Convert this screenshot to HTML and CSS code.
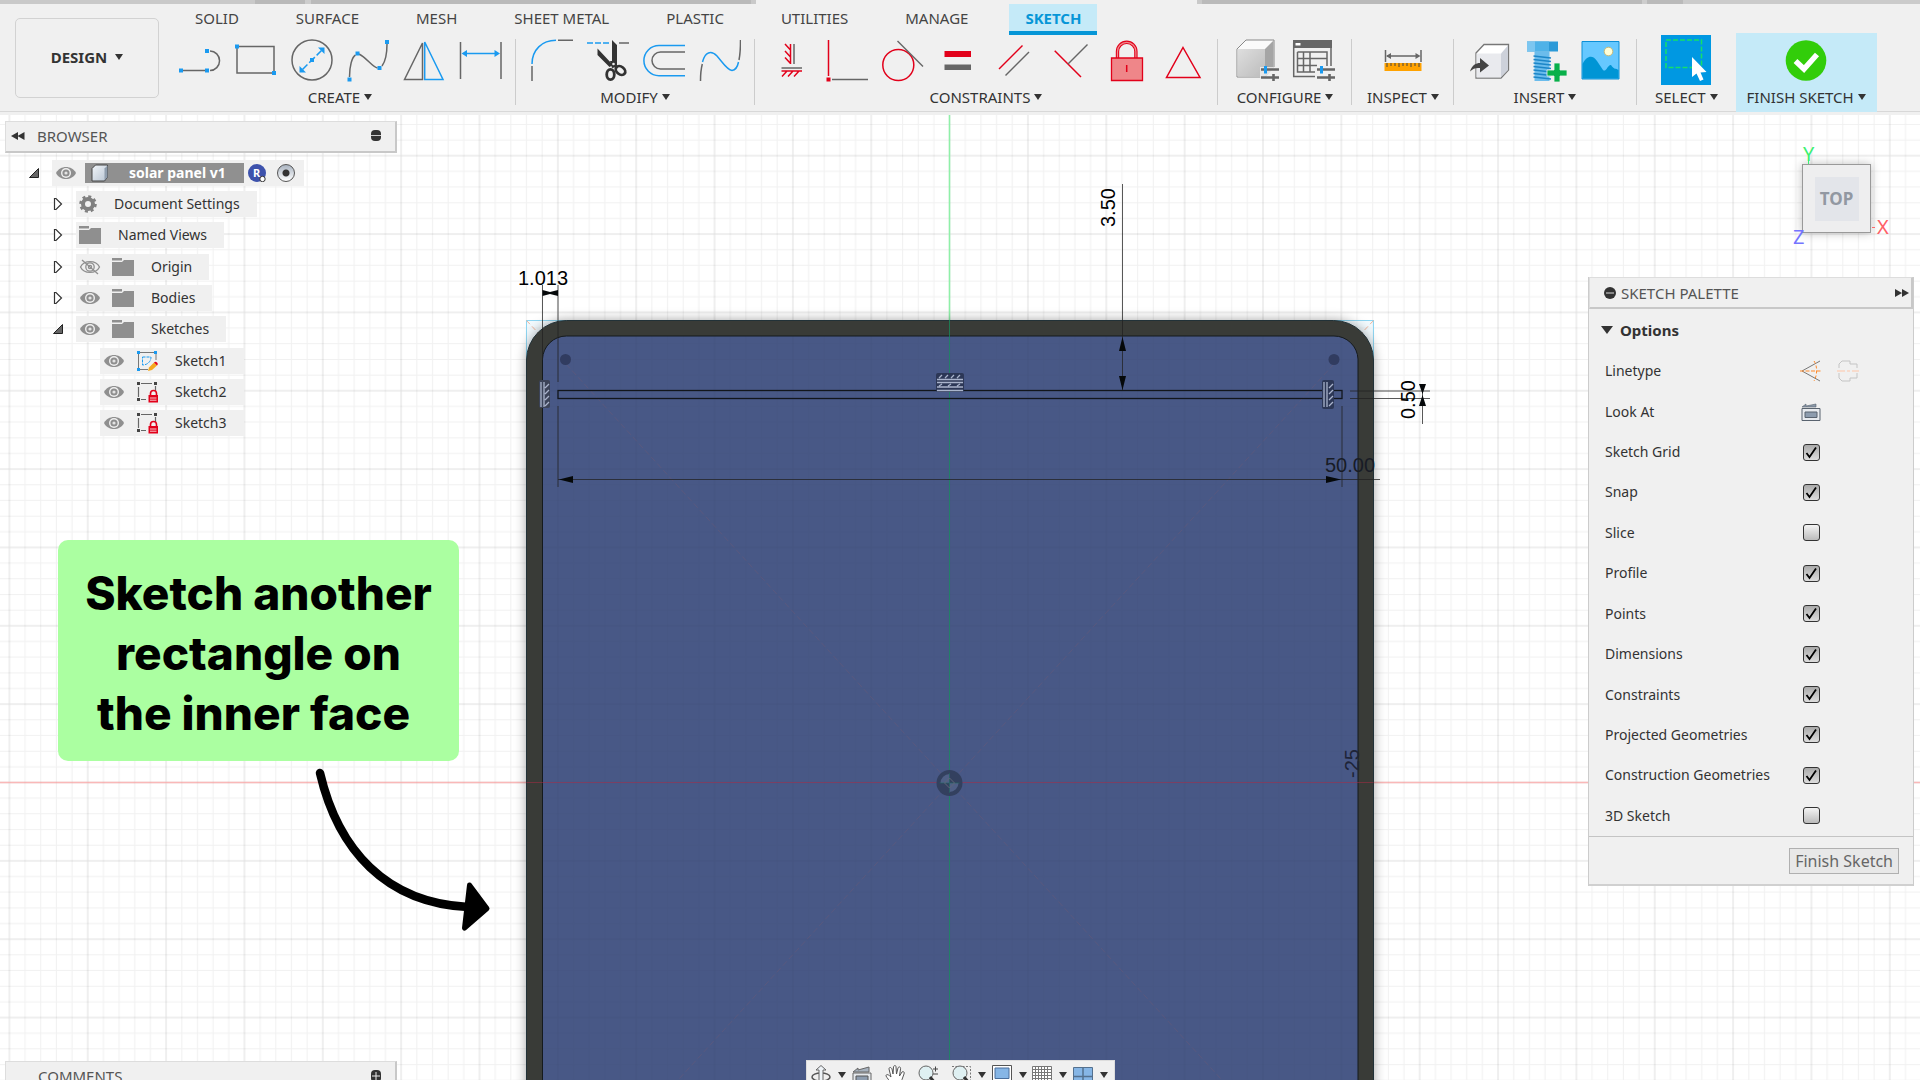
FILE: index.html
```html
<!DOCTYPE html>
<html lang="en">
<head>
<meta charset="utf-8">
<title>solar panel v1</title>
<link rel="stylesheet" href="styles.css">
</head>
<body>
<svg class="defs" aria-hidden="true">
  <defs>
    <symbol id="caret" viewBox="0 0 8 6"><path d="M0 0H8L4 6Z" fill="#333"/></symbol>
    <symbol id="eye" viewBox="0 0 22 16"><path d="M1 8C5 0 17 0 21 8C17 16 5 16 1 8Z" fill="#8f8f8f"/><circle cx="11" cy="8" r="5" fill="#f0f0f0"/><circle cx="11" cy="8" r="3.6" fill="#8f8f8f"/><circle cx="11" cy="8" r="1.6" fill="#e4e4e4"/></symbol>
    <symbol id="eye-off" viewBox="0 0 22 16"><g fill="none" stroke="#8f8f8f" stroke-width="1.3"><path d="M1.500 8C5 .8 17 .8 20.500 8C17 15.200 5 15.200 1.500 8Z"/><circle cx="11" cy="8" r="4.200"/><circle cx="11" cy="8" r="1.600"/><path d="M3 1L19 15"/></g></symbol>
    <symbol id="folder" viewBox="0 0 22 18"><path d="M0 0H10V2.500H0ZM0 4H10L12 2H22V18H0Z" fill="#8f8f8f"/></symbol>
    <symbol id="closed" viewBox="0 0 10 14"><path d="M1.500 1.500H3L8.500 7L3 12.500H1.500Z" fill="#fff" stroke="#333" stroke-width="1.200"/></symbol>
    <symbol id="open" viewBox="0 0 10 10"><path d="M9.500 .5V9.500H.5Z" fill="#666" stroke="#222"/></symbol>
    <symbol id="locked-sketch" viewBox="0 0 22 22"><g stroke="#666" stroke-width="1.200"><path d="M5 2.500H16M2.500 6V16M19.500 5V10M5 18.500H10"/></g><path d="M1 1h3v3H1zM18 1h3v3h-3zM1 17h3v3H1z" fill="#444"/><path d="M14.500 14V12.500a3 3 0 0 1 6 0V14" fill="none" stroke="#e2001a" stroke-width="1.600"/><path d="M12.500 14h9.500v7.500h-9.500z" fill="#e2001a"/><path d="M14 17h6.500M14 19.200h6.500" stroke="#fff" stroke-width=".8"/></symbol>
    <pattern id="grid" x="949.600" y="782.500" width="78.350" height="78.350" patternUnits="userSpaceOnUse">
      <path d="M15.670 0V78.350M31.340 0V78.350M47.010 0V78.350M62.680 0V78.350M0 15.670H78.350M0 31.340H78.350M0 47.010H78.350M0 62.680H78.350" stroke="#000" stroke-opacity=".055" stroke-width="1"/>
      <path d="M0 0V78.350M78.350 0V78.350M0 0H78.350M0 78.350H78.350" stroke="#000" stroke-opacity=".12" stroke-width="1"/>
    </pattern>
    <linearGradient id="face" x2="1" y2="1"><stop stop-color="#f2f6fa"/><stop offset="1" stop-color="#b8c4d2"/></linearGradient>
    <linearGradient id="cube" x2="1" y2="1"><stop stop-color="#dedede"/><stop offset="1" stop-color="#bcbcbc"/></linearGradient>
  </defs>
</svg>

<header class="toolbar">
  <div class="doc-strip"></div>
  <div class="toolbar-body">
    <button class="workspace" type="button">DESIGN <svg class="caret"><use href="#caret"/></svg></button>
    <div class="ribbon">
      <nav class="tabs">
        <a class="tab" href="#solid">SOLID</a>
        <a class="tab" href="#surface">SURFACE</a>
        <a class="tab" href="#mesh">MESH</a>
        <a class="tab" href="#sheet-metal">SHEET METAL</a>
        <a class="tab" href="#plastic">PLASTIC</a>
        <a class="tab" href="#utilities">UTILITIES</a>
        <a class="tab" href="#manage">MANAGE</a>
        <a class="tab tab-active" href="#sketch" aria-current="page">SKETCH</a>
      </nav>
      <div class="groups">
        <section class="group">
          <div class="tools">
            <button class="tool" type="button" aria-label="Line"><svg viewBox="0 0 44 44"><path d="M3 32.500H29M32 13A9.500 9.700 0 0 1 32 32.500" class="gray"/><path d="M1 30.500h4v4H1zM27 30.500h4v4h-4zM27 11h4v4h-4z" class="blue-fill"/></svg></button>
            <button class="tool" type="button" aria-label="Rectangle"><svg viewBox="0 0 44 44"><path d="M3 8.500H40V35H3Z" class="gray"/><path d="M1 6.500h4v4H1zM38 33h4v4h-4z" class="blue-fill"/></svg></button>
            <button class="tool" type="button" aria-label="Circle"><svg viewBox="0 0 44 44"><circle cx="22" cy="22" r="20" class="gray"/><path d="M12.500 31.500L31.500 12.500" class="blue" stroke-dasharray="7 2.500 8 2.500 8"/><path d="M20 20h4v4h-4zM34.500 9.500V16L28 9.500ZM9.500 34.500V28L16 34.500Z" class="blue-fill"/></svg></button>
            <button class="tool" type="button" aria-label="Spline"><svg viewBox="0 0 44 44"><path d="M3.500 39C3.500 28 6 19 9.500 17M13 16C21 20 26 29 31.500 30M36 28C39 24 41 15 41 6" class="gray"/><path d="M1.500 39.500h4v4h-4zM9.500 13.500h4v4h-4zM31.500 28h4v4h-4zM39 2h4v4h-4z" class="blue-fill"/></svg></button>
            <button class="tool" type="button" aria-label="Mirror"><svg viewBox="0 0 44 44"><path d="M2.500 41.500L20.500 5V41.500Z" class="gray"/><path d="M22.700 4V41.500H41Z" class="blue"/></svg></button>
            <button class="tool" type="button" aria-label="Sketch Dimension"><svg viewBox="0 0 44 44"><path d="M2.500 4V41M43 4V41" class="gray"/><path d="M6 15.500H40" class="blue"/><path d="M3.500 15.500L9 12v7zM42 15.500L36.500 12v7z" class="blue-fill"/></svg></button>
          </div>
          <button class="group-label" type="button">CREATE <svg class="caret"><use href="#caret"/></svg></button>
        </section>
        <section class="group">
          <div class="tools">
            <button class="tool" type="button" aria-label="Fillet"><svg viewBox="0 0 44 44"><path d="M3 26C3 12 13 2.300 27 2.300" class="blue"/><path d="M3 28V43M29 2.300H44" class="gray"/></svg></button>
            <button class="tool" type="button" aria-label="Trim"><svg viewBox="0 0 44 44"><path d="M2 5H24" class="blue" stroke-width="2" stroke-dasharray="6 2"/><path d="M34 5H44" class="gray"/><path d="M12.500 10.500L28 27L24.500 29L12.500 17ZM27 2L32 7V26L27 26Z" fill="#333"/><path d="M25 23H32V29L27 30Z" fill="#333"/><circle cx="28.500" cy="26" r="1.300" fill="#f0f0f0"/><g fill="none" stroke="#333" stroke-width="2.800"><ellipse cx="25.500" cy="36.500" rx="3.800" ry="5.200"/><ellipse cx="35.500" cy="32.500" rx="5.200" ry="3.800" transform="rotate(38 35.500 32.500)"/></g></svg></button>
            <button class="tool" type="button" aria-label="Offset"><svg viewBox="0 0 44 44"><path d="M44 7.500H18A15 15 0 0 0 18 37.700H44" class="blue" stroke-width="2"/><path d="M44 14H19.500A8.500 8.500 0 0 0 19.500 31H44" class="gray"/></svg></button>
            <button class="tool" type="button" aria-label="Break"><svg viewBox="0 0 44 44"><path d="M3.500 43C3.500 36 4 31 5.300 26M42 22C43 17 43.500 10 43.500 2" class="gray"/><path d="M5.500 24C8 14 14 12 20 18C26 25 30 32 35 32.500C39 32 40.500 29 41.500 24" class="blue"/></svg></button>
          </div>
          <button class="group-label" type="button">MODIFY <svg class="caret"><use href="#caret"/></svg></button>
        </section>
        <section class="group">
          <div class="tools">
            <button class="tool" type="button" aria-label="Horizontal/Vertical"><svg viewBox="0 0 44 44"><path d="M26 6V26M13.500 30H34" class="gray"/><path d="M22.500 6V26M22.500 12L17 6M22.500 19L17 13M22.500 25.500L17 19.500M13.500 33H34M14 38.500L19 33M20 38.500L25 33M26 38.500L31 33" class="red"/></svg></button>
            <button class="tool" type="button" aria-label="Coincident"><svg viewBox="0 0 44 44"><path d="M4.500 2V38" class="red"/><path d="M8 41.500H44" class="gray"/><path d="M2.500 39.500h4v4h-4z" class="red-fill"/></svg></button>
            <button class="tool" type="button" aria-label="Tangent"><svg viewBox="0 0 44 44"><circle cx="18.300" cy="27" r="15.500" class="red"/><path d="M17.500 3L43 28.500" class="gray"/></svg></button>
            <button class="tool" type="button" aria-label="Equal"><svg viewBox="0 0 44 44"><path d="M8.500 13h26.500v6H8.500z" class="red-fill"/><path d="M8.500 26.500h26.500v5.500H8.500z" fill="#666"/></svg></button>
            <button class="tool" type="button" aria-label="Parallel"><svg viewBox="0 0 44 44"><path d="M7 31L30.500 7.500" class="red"/><path d="M13.500 37.500L37 14" class="gray"/></svg></button>
            <button class="tool" type="button" aria-label="Perpendicular"><svg viewBox="0 0 44 44"><path d="M6.700 12.700L33 39" class="red"/><path d="M20 26L39.500 6.500" class="gray"/></svg></button>
            <button class="tool" type="button" aria-label="Fix"><svg viewBox="0 0 44 44"><path d="M13.500 20V13.500a9.200 9.200 0 0 1 18.400 0V20" fill="none" stroke="#e2001a" stroke-width="3.400"/><path d="M13.500 20V13.500a9.200 9.200 0 0 1 18.400 0V20" fill="none" stroke="#f08a8e" stroke-width="1.200"/><path d="M7.500 20H38.500V42.500H7.500Z" fill="#ef8689" stroke="#e2001a" stroke-width="1.300"/><path d="M22.700 27V34" class="red"/></svg></button>
            <button class="tool" type="button" aria-label="Midpoint"><svg viewBox="0 0 44 44"><path d="M23 9.500L40 39.500H6.500Z" class="red"/></svg></button>
          </div>
          <button class="group-label" type="button">CONSTRAINTS <svg class="caret"><use href="#caret"/></svg></button>
        </section>
        <section class="group group-configure">
          <div class="tools">
            <button class="tool" type="button" aria-label="Configure Model"><svg viewBox="0 0 44 44"><path d="M2 11L11 2H39V29L30 39H2Z" fill="#fafafa" stroke="#888"/><path d="M2.500 11H30V38.500H2.500Z" fill="url(#cube)"/><path d="M30 11L38.500 2.500V29L30 38.500Z" fill="#a5a5a5"/><path d="M25 29H44V44H25Z" fill="#f0f0f0" opacity=".8"/><path d="M26 31.500H44M26 39.500H44M38.500 36V43" stroke="#666" stroke-width="2.600"/><path d="M30.500 28V35.500" stroke="#1a9af0" stroke-width="3"/></svg></button>
            <button class="tool" type="button" aria-label="Configuration Table"><svg viewBox="0 0 44 44"><path d="M2.700 5V38.500H24M40 5V28" class="gray"/><path d="M2 2H41V10H2Z" fill="#666"/><path d="M4.500 5h5v2.500h-5z" fill="#fff"/><path d="M6.500 14H36V28M6.500 14V34H24M6.500 20.500H36M6.500 27.500H26M12.500 14V34M19 14V34" class="gray"/><path d="M26 31.500H44M26 39.500H44M38.500 36V43" stroke="#666" stroke-width="2.600"/><path d="M30.500 28V35.500" stroke="#1a9af0" stroke-width="3"/></svg></button>
          </div>
          <button class="group-label" type="button">CONFIGURE <svg class="caret"><use href="#caret"/></svg></button>
        </section>
        <section class="group group-inspect">
          <div class="tools">
            <button class="tool" type="button" aria-label="Measure"><svg viewBox="0 0 44 44"><path d="M4.500 12V24M40 12V24M6 18H38" class="gray"/><path d="M5 18L10 15v6zM39.500 18L34.500 15v6z" fill="#666"/><path d="M3.500 25h37v8h-37z" fill="#ffa200"/><path d="M6 25v4M10 25v3M14 25v3M18 25v4M22 25v3M26 25v3M30 25v4M34 25v3M38 25v4" stroke="#444"/></svg></button>
          </div>
          <button class="group-label" type="button">INSPECT <svg class="caret"><use href="#caret"/></svg></button>
        </section>
        <section class="group">
          <div class="tools">
            <button class="tool" type="button" aria-label="Insert Derive"><svg viewBox="0 0 44 44"><path d="M9 15L17 6.500H41.500V32L34 40H9Z" fill="#fff" stroke="#777" stroke-width="1.300"/><path d="M9.500 15.500H34V39.500H9.500Z" fill="#e9eaee"/><path d="M34 15.500L41 7.500V32L34 39Z" fill="#cdd1da"/><path d="M3 33.500C5 27 9 25 13 25V20L22 27.500L13 34.500V30C9 29.500 6 30.500 3 33.500Z" fill="#444"/></svg></button>
            <button class="tool" type="button" aria-label="Insert McMaster-Carr Component"><svg viewBox="0 0 44 44"><path d="M4 3.500H35V13.500H4Z" fill="#2c9ad8"/><path d="M4 3.500H12V13.500H4Z" fill="#7cc6f0"/><path d="M12 3.500H26V13.500H12Z" fill="#4fb2e8"/><path d="M11.500 13.500H26.500V43H11.500Z" fill="#6bbcec"/><path d="M10.500 18L28 20M10.500 21.500L28 23.500M10.500 25L28 27M10.500 28.500L28 30.500M10.500 32L28 34M10.500 35.500L28 37.500M10.500 39L28 41" stroke="#1c86c8" stroke-width="1.400"/><path d="M31 25h6v7h7v6h-7v6h-6v-6h-7v-6h7z" fill="#08b04a" stroke="#f0f0f0" stroke-width=".8"/></svg></button>
            <button class="tool" type="button" aria-label="Insert Canvas"><svg viewBox="0 0 44 44"><path d="M3 3.500H40V41H3Z" fill="#66c8ff" stroke="#0c8fd6"/><circle cx="29.500" cy="13.500" r="4.300" fill="#ffffd8" stroke="#c8b978"/><path d="M3.500 26C8 17 14 17 18 23L24 32C27 35 29 26 32 27C35 32 37 30 39.500 32V40.500H3.500Z" fill="#0095d5"/></svg></button>
          </div>
          <button class="group-label" type="button">INSERT <svg class="caret"><use href="#caret"/></svg></button>
        </section>
        <section class="group group-select">
          <div class="tools">
            <button class="tool tool-select" type="button" aria-label="Select"><svg viewBox="0 0 50 50"><path d="M5 5H40.500V32.500H5Z" fill="none" stroke="#14e06a" stroke-width="1.500" stroke-dasharray="5 2"/><path d="M31 22V42L35.500 38.500L39 46L42.500 44.500L39.500 37.500L45.500 37Z" fill="#fff"/></svg></button>
          </div>
          <button class="group-label" type="button">SELECT <svg class="caret"><use href="#caret"/></svg></button>
        </section>
        <section class="group group-finish">
          <div class="tools">
            <button class="tool" type="button" aria-label="Finish Sketch"><svg viewBox="0 0 44 44"><circle cx="22" cy="22.500" r="20.300" fill="#32cd0a"/><path d="M11.500 23L20 31L33 16.500" fill="none" stroke="#fff" stroke-width="5.500"/></svg></button>
          </div>
          <button class="group-label" type="button">FINISH SKETCH <svg class="caret"><use href="#caret"/></svg></button>
        </section>
      </div>
    </div>
  </div>
</header>

<main class="viewport">
  <svg class="canvas" viewBox="0 115 1920 965" preserveAspectRatio="xMidYMin slice" role="img" aria-label="Sketch canvas">
    <rect y="115" width="1920" height="965" fill="#fff"/>
    <rect y="115" width="1920" height="965" fill="url(#grid)"/>
    <path d="M0 782.500H1920" stroke="#ff9a9a" stroke-opacity=".65" stroke-width="1.500"/>
    <path d="M949.500 115V320" stroke="#8ff0a8" stroke-width="1.500"/>
    <rect x="526.500" y="320.500" width="847" height="900" fill="#e6f6fd" fill-opacity=".5" stroke="#8fd6f2"/>
    <path d="M526.500 320.500L542 337M1373.500 320.500L1358 337" stroke="#f0b49a" stroke-dasharray="5 3"/>
    <path class="body-shadow" d="M526.500 1100V360A40 40 0 0 1 566.500 320.500H1333.500A40 40 0 0 1 1373.500 360V1100Z" fill="#393b37" stroke="#223238"/>
    <path d="M542.500 1100V359A24 24 0 0 1 566.500 336H1334A24 24 0 0 1 1358 359V1100Z" fill="#485886" stroke="#151a1d"/>
    <path d="M542.500 1100V359A24 24 0 0 1 566.500 336H1334A24 24 0 0 1 1358 359V1100Z" fill="url(#grid)" fill-opacity=".35"/>
    <path d="M566 364L1221 1079M1334 364L679 1079" stroke="#8a5668" stroke-opacity=".25" stroke-dasharray="6 3"/>
    <path d="M949.500 320V1080" stroke="#14935c" stroke-opacity=".7"/>
    <path d="M526.500 782.500H1373.500" stroke="#b02a44" stroke-opacity=".5"/>
    <circle cx="565.500" cy="359.500" r="5.500" fill="#313c60"/>
    <circle cx="1334" cy="359.500" r="5.500" fill="#313c60"/>
    <circle cx="949.500" cy="783" r="13" fill="#33405f"/>
    <path d="M949.500 783V774A9 9 0 0 0 940.500 783ZM949.500 783V792A9 9 0 0 0 958.500 783Z" fill="#4f5f86"/>
    <path d="M949.500 773V793M939.500 783H959.500" stroke="#226b60" stroke-opacity=".6"/>
    <path d="M944.500 783L949.500 778L954.500 783L949.500 788Z" fill="none" stroke="#5f6678"/>
    <rect x="558" y="390.500" width="784" height="8" fill="none" stroke="#12161c" stroke-width="1.300"/>
    <g stroke="#222" stroke-opacity=".75" fill="none">
      <path d="M542.500 285V360M558 285V382M558 406V487M1342 406V487M558 479.500H1380M1122.500 184V390M1350 391H1430M1350 398.500H1430M1422.500 384V424"/>
    </g>
    <path d="M542.500 290L550 292L558 290V296L550 294L542.500 296ZM559 479.500L573 476V483ZM1341 479.500L1326 476V483ZM1122.500 337L1119 351H1126ZM1122.500 390L1119 376H1126ZM1422.500 394L1419 384H1426ZM1422.500 395L1419 406H1426Z" fill="#05080a"/>
    <g class="glyphs">
      <g><rect x="936" y="373" width="28" height="19" rx="2" fill="#2c3756"/><path d="M937 379.500H963M937 382.500H963M937 387H963M937 390.500H963M939 378L942 375M945 378L948 375M951 378L954 375M957 378L960 375M939 386L942 384M948 386L951 384M957 386L960 384"/></g>
      <g><rect x="539" y="380" width="11" height="28" rx="2" fill="#3b4358"/><path d="M541 382V407M544 382V407M545 388L549 384M545 394L549 390M545 400L549 396M545 406L549 402"/></g>
      <g><rect x="1322" y="380" width="12" height="29" rx="2" fill="#2c3756"/><path d="M1324 382V407M1327 382V407M1329 388L1333 384M1329 394L1333 390M1329 400L1333 396M1329 406L1333 402"/></g>
    </g>
    <g class="dims">
      <text x="518" y="285">1.013</text>
      <text transform="translate(1115 227) rotate(-90)">3.50</text>
      <text transform="translate(1415 419) rotate(-90)">0.50</text>
      <text x="1325" y="472" fill="#181c26">50.00</text>
      <text transform="translate(1359 778) rotate(-90)" fill="#1e2438">-25</text>
    </g>
    <path d="M320 773C338 850 386 903 468 907" fill="none" stroke="#000" stroke-width="8.500" stroke-linecap="round"/>
    <path d="M469.500 885L487 908.500L464.500 928Z" stroke="#000" stroke-width="5" stroke-linejoin="round"/>
  </svg>

  <aside class="browser">
    <header class="bar">
      <svg class="icon-rewind" viewBox="0 0 14 8"><path d="M0 4L7 0V8ZM6.500 4L13.500 0V8Z" fill="#333"/></svg>
      <h2 class="bar-title">BROWSER</h2>
      <button class="bar-button" type="button" aria-label="Minimize"><svg viewBox="0 0 12 12"><rect x="1" width="10" height="11" rx="4" fill="#333"/><path d="M1 5.500H11" stroke="#ccc"/></svg></button>
    </header>
    <ul class="tree">
      <li class="node node-root">
        <svg class="expander"><use href="#open"/></svg>
        <div class="node-body">
          <svg class="eye"><use href="#eye"/></svg>
          <span class="node-selected"><svg class="icon-component" viewBox="0 0 18 18"><path d="M1 4.500L4.500 1H16.500V13L13.500 17H1Z" fill="url(#face)" stroke="#444"/><path d="M13.500 4.500L16.500 1.500V13L13.500 16.500Z" fill="#8f9dad"/></svg>solar panel v1</span>
          <svg class="icon-small" viewBox="0 0 18 18"><circle cx="9" cy="9" r="9" fill="#3d52ac"/><text x="5" y="13" class="badge-letter">R</text><circle cx="14.500" cy="15" r="2.700" fill="#fff" stroke="#333"/></svg>
          <input class="activate" type="radio" name="active" aria-label="Activate component" checked>
        </div>
      </li>
      <li class="node">
        <svg class="expander"><use href="#closed"/></svg>
        <div class="node-body"><svg class="icon-small" viewBox="0 0 18 18"><circle cx="9" cy="9" r="5" fill="none" stroke="#808080" stroke-width="4"/><circle cx="9" cy="9" r="7.500" fill="none" stroke="#808080" stroke-width="2.600" stroke-dasharray="3 2.890"/></svg><span class="node-name">Document Settings</span></div>
      </li>
      <li class="node">
        <svg class="expander"><use href="#closed"/></svg>
        <div class="node-body"><svg class="folder"><use href="#folder"/></svg><span class="node-name">Named Views</span></div>
      </li>
      <li class="node">
        <svg class="expander"><use href="#closed"/></svg>
        <div class="node-body"><svg class="eye"><use href="#eye-off"/></svg><svg class="folder"><use href="#folder"/></svg><span class="node-name">Origin</span></div>
      </li>
      <li class="node">
        <svg class="expander"><use href="#closed"/></svg>
        <div class="node-body"><svg class="eye"><use href="#eye"/></svg><svg class="folder"><use href="#folder"/></svg><span class="node-name">Bodies</span></div>
      </li>
      <li class="node">
        <svg class="expander"><use href="#open"/></svg>
        <div class="node-body"><svg class="eye"><use href="#eye"/></svg><svg class="folder"><use href="#folder"/></svg><span class="node-name">Sketches</span></div>
      </li>
      <li class="node node-leaf">
        <div class="node-body"><svg class="eye"><use href="#eye"/></svg><svg class="folder sketch-icon" viewBox="0 0 22 22"><path d="M2.500 2V20M2 2.500H20M20 2V10M2 19.500H12" stroke="#777" fill="none"/><path d="M6.500 7H15C15 12 11 15 6.500 15Z" fill="none" stroke="#1a9af0" stroke-dasharray="3 1"/><path d="M1 1h3v3H1zM18 1h3v3h-3zM1 18h3v3H1z" fill="#1a9af0"/><path d="M12 21L13 17.500L18 12.500L21 15.500L16 20Z" fill="#f5a81c"/><path d="M18 12.500a2 2 0 1 1 3 3Z" fill="#e2001a"/></svg><span class="node-name">Sketch1</span></div>
      </li>
      <li class="node node-leaf">
        <div class="node-body"><svg class="eye"><use href="#eye"/></svg><svg class="folder sketch-icon"><use href="#locked-sketch"/></svg><span class="node-name">Sketch2</span></div>
      </li>
      <li class="node node-leaf">
        <div class="node-body"><svg class="eye"><use href="#eye"/></svg><svg class="folder sketch-icon"><use href="#locked-sketch"/></svg><span class="node-name">Sketch3</span></div>
      </li>
    </ul>
  </aside>

  <aside class="right-dock">
    <svg class="viewcube" viewBox="0 0 110 110" role="img" aria-label="View cube, top">
      <rect class="cube-face" x="16.500" y="19.500" width="68" height="68" fill="#eeeeef" stroke="#999"/>
      <rect x="29" y="32" width="44" height="44" fill="#e3e5ea"/>
      <path d="M22.500 15V19" stroke="#3cf070"/>
      <path d="M86 82.500H89" stroke="#ff6b6b"/>
      <text x="50.500" y="60" text-anchor="middle" class="cube-label">TOP</text>
      <g class="axis"><text x="17" y="16" fill="#3cf070">Y</text><text x="91" y="89" fill="#ff6068">X</text><text x="7" y="99" fill="#7474ff">Z</text></g>
    </svg>
    <section class="palette">
      <header class="bar">
        <button class="bar-button" type="button" aria-label="Minimize"><svg viewBox="0 0 12 12"><circle cx="6" cy="6" r="6" fill="#333"/><path d="M2 6H10" stroke="#ddd"/></svg></button>
        <h2 class="bar-title">SKETCH PALETTE</h2>
        <svg class="icon-forward" viewBox="0 0 14 8"><path d="M0 0L7 4L0 8ZM7 0L14 4L7 8Z" fill="#333"/></svg>
      </header>
      <h3 class="palette-heading"><svg viewBox="0 0 12 8"><path d="M0 0H12L6 8Z" fill="#333"/></svg>Options</h3>
      <div class="options">
        <div class="option"><span>Linetype</span>
          <span class="option-tools">
            <button class="mini" type="button" aria-label="Construction"><svg viewBox="0 0 22 22"><path d="M20 1L2 11L20 21" fill="none" stroke="#777"/><path d="M0 11H22" stroke="#ff8a2a" stroke-dasharray="4 1.500"/><path d="M14 1C17 5 18 14 14 21" fill="none" stroke="#ff8a2a" stroke-dasharray="3 2"/></svg></button>
            <button class="mini" type="button" aria-label="Centerline"><svg viewBox="0 0 22 22"><path d="M2 8V4L5 1H13V4H20V8M2 13V18L5 21H13V18H20V13" fill="none" stroke="#c4c4c4"/><path d="M0 11H22" stroke="#ffc6a8" stroke-dasharray="8 2 3 2"/></svg></button>
          </span>
        </div>
        <div class="option"><span>Look At</span><button class="mini" type="button" aria-label="Look At"><svg viewBox="0 0 22 22"><path d="M2 7.500H20V19.500H2Z" fill="#e8ebef" stroke="#59636f"/><path d="M5 11H17V16.500H5Z" fill="#8d9cae" stroke="#59636f"/><path d="M2 6L6 3V5L16 3V6Z" fill="#8a98a8" stroke="#59636f" stroke-width=".6"/></svg></button></div>
        <label class="option"><span>Sketch Grid</span><input type="checkbox" checked></label>
        <label class="option"><span>Snap</span><input type="checkbox" checked></label>
        <label class="option"><span>Slice</span><input type="checkbox"></label>
        <label class="option"><span>Profile</span><input type="checkbox" checked></label>
        <label class="option"><span>Points</span><input type="checkbox" checked></label>
        <label class="option"><span>Dimensions</span><input type="checkbox" checked></label>
        <label class="option"><span>Constraints</span><input type="checkbox" checked></label>
        <label class="option"><span>Projected Geometries</span><input type="checkbox" checked></label>
        <label class="option"><span>Construction Geometries</span><input type="checkbox" checked></label>
        <label class="option"><span>3D Sketch</span><input type="checkbox"></label>
      </div>
      <footer class="palette-footer"><button class="finish" type="button">Finish Sketch</button></footer>
    </section>
  </aside>

  <p class="callout">Sketch another<br>rectangle on<br>the inner face&nbsp;</p>

  <div class="bottom-dock">
    <section class="bar comments">
      <h2 class="bar-title">COMMENTS</h2>
      <button class="bar-button" type="button" aria-label="Add comment"><svg viewBox="0 0 12 12"><rect x="1" width="10" height="12" rx="4" fill="#333"/><path d="M2 6H10M6 2V10" stroke="#eee"/></svg></button>
    </section>
    <div class="navbar">
      <button class="nav nav-menu" type="button" aria-label="Orbit"><svg viewBox="0 0 20 20"><ellipse cx="10" cy="12" rx="9" ry="4" fill="none" stroke="#555" stroke-width="1.500"/><path d="M8 16V5H5L10 .5L15 5H12V16Z" fill="#eef3f7" stroke="#666"/></svg><svg class="caret"><use href="#caret"/></svg></button>
      <button class="nav" type="button" aria-label="Look At"><svg viewBox="0 0 20 20"><path d="M1 8H19V20H1Z" fill="#e4e8ec" stroke="#666"/><path d="M4 11H16V18H4Z" fill="#8d9cae" stroke="#555"/><path d="M1 7L6 3V5L17 2V7Z" fill="#a6b1bd" stroke="#666"/></svg></button>
      <button class="nav" type="button" aria-label="Pan"><svg viewBox="0 0 20 20"><path d="M7 20C5 16 2 13 1 11C1 9 3 9 6 12L4 4C4 2 6 2 7 4L8 9L8.500 2C9 0 11 0 11 2L11.500 9L13 3C14 1 16 2 15.500 4L14.500 11L17 7C18 6 20 7 19 9C18 13 16 16 15 20" fill="#fff" stroke="#555"/></svg></button>
      <button class="nav" type="button" aria-label="Zoom"><svg viewBox="0 0 20 20"><circle cx="8" cy="8" r="7" fill="#dff0f2" stroke="#666"/><path d="M12 12L17 18" stroke="#333" stroke-width="3"/><path d="M15 4H20M17.500 1.500V6.500M15 9H20" stroke="#444"/></svg></button>
      <button class="nav nav-menu" type="button" aria-label="Zoom Window"><svg viewBox="0 0 20 20"><path d="M1 1.500H19.500V19" fill="none" stroke="#777" stroke-dasharray="2 1.500"/><circle cx="9" cy="8" r="7" fill="#dff0f2" stroke="#666"/><path d="M13 12L18 18" stroke="#333" stroke-width="3"/></svg><svg class="caret"><use href="#caret"/></svg></button>
      <button class="nav nav-menu" type="button" aria-label="Display Settings"><svg viewBox="0 0 20 20"><path d="M.5 .5H19.500V17H.5Z" fill="#fff" stroke="#555"/><path d="M3 3H17V13.500H3Z" fill="#86b6e6" stroke="#4a6f9c"/></svg><svg class="caret"><use href="#caret"/></svg></button>
      <button class="nav nav-menu" type="button" aria-label="Grid and Snaps"><svg viewBox="0 0 20 20"><path d="M.5 1.500H19.500V19.500H.5ZM3.500 1V20M6.500 1V20M9.500 1V20M12.500 1V20M15.500 1V20M0 4.500H20M0 7.500H20M0 10.500H20M0 13.500H20M0 16.500H20" fill="#fff" stroke="#777"/></svg><svg class="caret"><use href="#caret"/></svg></button>
      <button class="nav nav-menu" type="button" aria-label="Viewports"><svg viewBox="0 0 20 20"><path d="M.5 2.500H19.500V20H.5Z" fill="#86b6e6" stroke="#54718f"/><path d="M10 2V20M0 11.500H20" stroke="#54718f" stroke-width="1.500"/></svg><svg class="caret"><use href="#caret"/></svg></button>
    </div>
  </div>
</main>
</body>
</html>
```
FILE: styles.css
```css
* {
  box-sizing: border-box;
}

body {
  display: flex;
  flex-direction: column;
  height: 100vh;
  margin: 0;
  overflow: hidden;
  background: #fff;
  color: #333;
  font: 14px/20px "Noto Sans", "Open Sans", sans-serif;
}

svg {
  display: block;
  flex: none;
}

button {
  padding: 0;
  border: 0;
  background: none;
  color: inherit;
  font: inherit;
}

h2,
h3,
p,
ul {
  margin: 0;
  padding: 0;
}

.defs {
  position: absolute;
  width: 0;
  height: 0;
}

.caret {
  width: 8px;
  height: 6px;
}

/* Toolbar */
.toolbar {
  flex: none;
  height: 115px;
  background: #f0f0f0;
}

.doc-strip {
  height: 4px;
  background: linear-gradient(90deg, #c9c9c9 255px, #b9b9b9 255px 305px, #cdcdcd 305px 311px, #bababa 311px 751px, #c9c9c9 751px 756px, #f0f0f0 756px 1197px, #c9c9c9 1197px 1202px, #bababa 1202px 1642px, #cdcdcd 1642px 1647px, #bababa 1647px 1683px, #cbcbcb 1683px);
}

.toolbar-body {
  display: flex;
  height: 108px;
  border-bottom: 1px solid #d8d8d8;
}

.workspace {
  display: flex;
  flex: none;
  align-items: center;
  justify-content: center;
  gap: 8px;
  width: 144px;
  height: 80px;
  margin: 14px 13px 0 15px;
  padding-bottom: 3px;
  border: 1px solid #d2d2d2;
  border-radius: 5px;
  font-size: 15px;
  font-weight: 700;
}

.ribbon {
  flex: 1;
}

.tabs {
  display: flex;
  gap: 25px;
  height: 31px;
  padding-left: 7px;
}

.tab {
  padding: 4px 16px 0;
  color: #444;
  font-size: 15px;
  text-decoration: none;
}

.tab-active {
  border-bottom: 4px solid #0696d7;
  background: #c5eaf8;
  color: #0696d7;
  font-weight: 700;
}

.groups {
  display: flex;
  height: 76px;
}

.group {
  position: relative;
  display: flex;
  flex-direction: column;
  align-items: center;
  padding: 0 8px 0 7px;
}

.group:first-child {
  padding-left: 0;
}

.group::after {
  content: "";
  position: absolute;
  top: 4px;
  right: 0;
  width: 1px;
  height: 66px;
  background: #ccc;
}

.group-configure {
  padding: 0 11px;
}

.group-inspect {
  padding: 0 15px;
}

.group-select {
  padding: 0 18px;
}

.group-select::after,
.group-finish::after {
  content: none;
}

.group-finish {
  height: 79px;
  margin-top: -2px;
  padding: 2px 11px 0;
  background: #c5eaf8;
}

.tools {
  display: flex;
  height: 50px;
}

.tool {
  display: flex;
  align-items: center;
  justify-content: center;
  width: 56px;
  height: 50px;
}

.tool svg {
  width: 44px;
  height: 44px;
}

.tool-select {
  width: 50px;
  background: #0098e2;
}

.tool-select svg {
  width: 50px;
  height: 50px;
}

.group-label {
  display: flex;
  align-items: center;
  gap: 4px;
  height: 24px;
  font-size: 15px;
  white-space: nowrap;
}

.gray,
.blue,
.red {
  fill: none;
  stroke-width: 1.5;
}

.gray {
  stroke: #666;
}

.blue {
  stroke: #1a9af0;
}

.red {
  stroke: #e2001a;
}

.blue-fill {
  fill: #1a9af0;
}

.red-fill {
  fill: #e2001a;
}

/* Canvas */
.viewport {
  position: relative;
  display: flex;
  flex: 1;
  align-items: flex-start;
  justify-content: space-between;
  min-height: 0;
  padding: 6px 6px 0 5px;
  overflow: hidden;
}

.canvas {
  position: absolute;
  inset: 0;
  width: 100%;
  height: 100%;
}

.body-shadow {
  filter: drop-shadow(0 0 6px rgb(0 0 0 / 35%));
}

.glyphs path {
  stroke: #aab4cc;
  stroke-width: 1.3;
}

.dims {
  font: 20px "Liberation Sans", Arial, sans-serif;
}

.callout {
  position: absolute;
  top: 425px;
  left: 58px;
  width: 401px;
  padding: 23px 0 18px;
  border-radius: 10px;
  background: #abffa1;
  color: #000;
  font: 800 46px/60px Inter, sans-serif;
  text-align: center;
  white-space: nowrap;
}

/* Panels */
.bar {
  display: flex;
  align-items: center;
  height: 32px;
  border: 1px solid #ddd;
  border-right: 2px solid #c8c8c8;
  border-bottom: 2px solid #c8c8c8;
  background: #f0f0f0;
}

.bar-title {
  flex: 1;
  color: #555;
  font-size: 15px;
  font-weight: 400;
}

.bar-button svg {
  width: 12px;
  height: 12px;
}

.browser {
  position: relative;
  width: 392px;
}

.browser .bar,
.comments {
  padding: 0 13px 2px 5px;
}

.icon-rewind,
.icon-forward {
  width: 14px;
  height: 8px;
}

.icon-rewind {
  margin-right: 12px;
}

.tree {
  display: grid;
  grid-auto-rows: 1fr;
  height: 282px;
  margin-top: 4px;
  list-style: none;
}

.node {
  display: flex;
  align-items: center;
  gap: 13px;
  padding-left: 48px;
}

.node-root {
  padding-left: 24px;
}

.node-leaf {
  padding-left: 95px;
}

.expander {
  width: 10px;
  height: 14px;
}

.node-body {
  display: flex;
  align-items: center;
  gap: 11px;
  height: 26px;
  padding: 0 17px 0 3px;
  background: #f0f0f0;
}

.node-root .node-body {
  gap: 8px;
  padding-right: 9px;
}

.node-selected {
  display: flex;
  align-items: center;
  gap: 20px;
  width: 159px;
  height: 20px;
  margin-right: -4px;
  padding-left: 6px;
  background: #909090;
  color: #fff;
  font-weight: 700;
}

.node-name {
  padding-left: 6px;
}

.icon-small,
.icon-component {
  width: 18px;
  height: 18px;
}

.badge-letter {
  fill: #fff;
  font-size: 11px;
  font-weight: 700;
}

.activate {
  width: 18px;
  height: 18px;
  margin: 0 0 0 3px;
  border: 1px solid #555;
  border-radius: 50%;
  background: radial-gradient(circle, #333 3px, transparent 4px), linear-gradient(#a9b3c0, #fff);
  appearance: none;
}

.eye {
  width: 22px;
  height: 16px;
}

.folder {
  width: 22px;
  height: 18px;
}

.sketch-icon {
  height: 22px;
}

.right-dock {
  position: relative;
  width: 326px;
  padding-top: 24px;
}

.viewcube {
  width: 110px;
  height: 110px;
  margin: 0 0 22px 198px;
  overflow: visible;
}

.cube-face {
  filter: drop-shadow(0 0 5px rgb(0 0 0 / 25%));
}

.cube-label {
  fill: #9298a2;
  font: 700 17px "Noto Sans", sans-serif;
}

.axis {
  font: 20px "Noto Sans", sans-serif;
}

.palette {
  border-right: 1px solid #ccc;
  border-left: 1px solid #ccc;
  background: #f0f0f0;
}

.palette .bar {
  gap: 5px;
  padding: 0 2px 0 14px;
}

.palette-heading {
  display: flex;
  align-items: center;
  gap: 7px;
  height: 42px;
  padding-left: 12px;
  font-size: 15px;
}

.palette-heading svg {
  width: 12px;
  height: 8px;
}

.options {
  display: grid;
  grid-auto-rows: 1fr;
  height: 485px;
}

.option {
  display: grid;
  grid-template-columns: 195px 1fr;
  align-items: center;
  justify-items: start;
  padding-left: 16px;
}

.option input {
  width: 17px;
  height: 17px;
  margin: 0 0 0 3px;
  border: 1px solid #333;
  border-radius: 3px;
  background: linear-gradient(#f4f4f4, #bbb);
  appearance: none;
}

.option input:checked {
  background: url("data:image/svg+xml,%3Csvg xmlns='http://www.w3.org/2000/svg' viewBox='0 0 15 15'%3E%3Cpath d='M2.500 8L5.500 12L12 2.500' fill='none' stroke='%23000' stroke-width='1.800'/%3E%3C/svg%3E"), linear-gradient(#aaa, #ddd);
}

.option-tools {
  display: flex;
  gap: 15px;
}

.mini svg {
  width: 22px;
  height: 22px;
}

.palette-footer {
  display: flex;
  align-items: center;
  justify-content: flex-end;
  height: 50px;
  padding-right: 14px;
  border-top: 1px solid #c4c4c4;
  border-bottom: 2px solid #d0d0d0;
}

.finish {
  height: 26px;
  padding: 0 5px;
  border: 1px solid #b0b0b0;
  background: #e8e8e8;
  color: #666;
  font-size: 16px;
}

/* Bottom edge: both bars run past the window */
.bottom-dock {
  position: absolute;
  bottom: 0;
  left: 5px;
  right: 0;
  display: flex;
  align-items: flex-start;
  height: 20px;
}

.comments {
  width: 392px;
  margin-top: 1px;
  padding-left: 32px;
}

.navbar {
  display: flex;
  width: 309px;
  height: 34px;
  margin-left: 409px;
  padding: 4px 0 0 4px;
  border: 1px solid #ddd;
  background: #f0f0f0;
}

.nav {
  display: flex;
  align-items: center;
  gap: 7px;
  width: 34px;
  height: 20px;
}

.nav-menu {
  width: 42px;
}

.nav svg:first-child {
  width: 20px;
  height: 20px;
}
```
